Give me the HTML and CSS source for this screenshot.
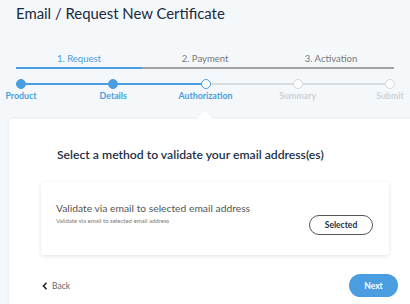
FILE: index.html
```html
<!DOCTYPE html>
<html lang="en">
<head>
  <meta charset="UTF-8">
  <meta name="viewport" content="width=device-width, initial-scale=1.0">
  <title>Email / Request New Certificate</title>
  <link rel="stylesheet" href="styles.css">
</head>
<body>

<h1 class="page-title">Email / Request New Certificate</h1>

<div class="phases">
  <div class="phase active">1. Request</div>
  <div class="phase">2. Payment</div>
  <div class="phase">3. Activation</div>
</div>

<div class="stepper">
  <div class="step done"><span class="dot"></span><span class="step-label">Product</span></div>
  <span class="link done"></span>
  <div class="step done"><span class="dot"></span><span class="step-label">Details</span></div>
  <span class="link done"></span>
  <div class="step current"><span class="dot"></span><span class="step-label">Authorization</span></div>
  <span class="link"></span>
  <div class="step"><span class="dot"></span><span class="step-label">Summary</span></div>
  <span class="link"></span>
  <div class="step"><span class="dot"></span><span class="step-label">Submit</span></div>
</div>

<div class="card">
  <!-- little pointer under the current step -->
  <span class="pointer"></span>

  <h2 class="card-heading">Select a method to validate your email address(es)</h2>

  <div class="method">
    <div class="method-text">
      <div class="method-title">Validate via email to selected email address</div>
      <div class="method-sub">Validate via email to selected email address</div>
    </div>
    <button class="select-button">Selected</button>
  </div>

  <div class="card-footer">
    <button class="back-button">
      <svg width="6" height="8" viewBox="0 0 6 8"><path d="M4.5 0.8 L1.5 4 L4.5 7.2" fill="none" stroke="#222" stroke-width="1.6"/></svg>
      Back
    </button>
    <button class="next-button">Next</button>
  </div>
</div>

</body>
</html>
```

FILE: styles.css
```css
body {
  margin: 0;
  padding: 0;
  background-color: #f5f8fb;
  font-family: Lato, "Open Sans", sans-serif;
  overflow: hidden;
  height: 304px;
}

.page-title {
  margin: 3px 16px 0;
  font-size: 14.9px;
  font-weight: 400;
  line-height: 20px;
  color: #182a3d;
}

.phases {
  display: flex;
  margin: 30px 16px 0;
}

.phase {
  flex: 1;
  text-align: center;
  font-size: 9.5px;
  line-height: 12px;
  padding-bottom: 2px;
  color: #777;
  border-bottom: 2px solid #a3a3a3;
}

.phase.active {
  color: #4a9de0;
  border-bottom-color: #4a9de0;
}

.stepper {
  display: flex;
  align-items: flex-start;
  margin: 10px 15px 0 16px;
}

.step {
  width: 10px;
  display: flex;
  flex-direction: column;
  align-items: center;
}

.dot {
  width: 10px;
  height: 10px;
  box-sizing: border-box;
  border-radius: 50%;
  border: 1.5px solid #d3d8dd;
  background-color: #fff;
}

.step.done .dot {
  background-color: #4a9de0;
  border-color: #4a9de0;
}

.step.current .dot {
  border-color: #4a9de0;
}

.step-label {
  margin-top: 1px;
  font-size: 8.8px;
  font-weight: 700;
  line-height: 11px;
  white-space: nowrap;
  color: #ccd2d8;
}

.step.done .step-label,
.step.current .step-label {
  color: #4a9de0;
}

.link {
  flex: 1;
  height: 2px;
  margin-top: 4px;
  background-color: #d8dde2;
}

.link.done {
  background-color: #4a9de0;
}

.card {
  position: relative;
  margin: 18px -20px 0 9px;
  padding: 28px 41px 0 32px;
  height: 162px;
  background-color: #fff;
  border-radius: 4px;
  box-shadow: 0 0 4px rgba(0, 0, 0, 0.05);
}

.pointer {
  position: absolute;
  top: -8px;
  left: 188px;
  width: 0;
  height: 0;
  border-left: 8px solid transparent;
  border-right: 8px solid transparent;
  border-bottom: 8px solid #fff;
}

.card-heading {
  margin: 0 0 0 16px;
  font-size: 12.2px;
  font-weight: 600;
  line-height: 16px;
  color: #1c3047;
}

.method {
  display: flex;
  align-items: flex-start;
  justify-content: space-between;
  margin-top: 19px;
  width: 348px;
  height: 73px;
  box-sizing: border-box;
  padding: 19px 16px 0 15px;
  background-color: #fff;
  border-radius: 3px;
  box-shadow: 0 1px 4px rgba(0, 0, 0, 0.12);
}

.method-title {
  font-size: 10.3px;
  line-height: 15px;
  color: #555;
}

.method-sub {
  font-size: 6px;
  line-height: 9px;
  color: #777;
}

.select-button {
  width: 64px;
  height: 20px;
  margin-top: 14px;
  border: 1px solid #555;
  border-radius: 10px;
  background-color: #fff;
  font-family: Lato, sans-serif;
  font-size: 8.5px;
  font-weight: 700;
  color: #1c3047;
  cursor: pointer;
}

.card-footer {
  display: flex;
  align-items: center;
  justify-content: space-between;
  width: 356px;
  margin-top: 19px;
  padding-left: 1px;
}

.back-button {
  display: flex;
  align-items: center;
  gap: 4px;
  padding: 0;
  border: none;
  background: none;
  font-family: Lato, sans-serif;
  font-size: 8.5px;
  color: #666;
  cursor: pointer;
}

.next-button {
  width: 49px;
  height: 23px;
  border: none;
  border-radius: 12px;
  background-color: #4a9de0;
  font-family: Lato, sans-serif;
  font-size: 8.5px;
  font-weight: 700;
  color: #fff;
  cursor: pointer;
}
```
